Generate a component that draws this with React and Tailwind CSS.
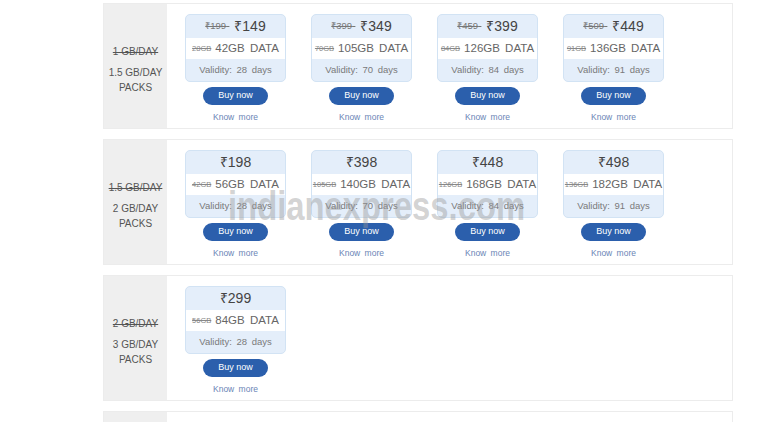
import React from "react";

const sections = [
  {
    old: "1 GB/DAY",
    title: ["1.5 GB/DAY", "PACKS"],
    cards: [
      { oldPrice: "₹199", price: "₹149", oldData: "28GB", data: "42GB", validity: "28" },
      { oldPrice: "₹399", price: "₹349", oldData: "70GB", data: "105GB", validity: "70" },
      { oldPrice: "₹459", price: "₹399", oldData: "84GB", data: "126GB", validity: "84" },
      { oldPrice: "₹509", price: "₹449", oldData: "91GB", data: "136GB", validity: "91" },
    ],
  },
  {
    old: "1.5 GB/DAY",
    title: ["2 GB/DAY", "PACKS"],
    cards: [
      { price: "₹198", oldData: "42GB", data: "56GB", validity: "28" },
      { price: "₹398", oldData: "105GB", data: "140GB", validity: "70" },
      { price: "₹448", oldData: "126GB", data: "168GB", validity: "84" },
      { price: "₹498", oldData: "136GB", data: "182GB", validity: "91" },
    ],
  },
  {
    old: "2 GB/DAY",
    title: ["3 GB/DAY", "PACKS"],
    cards: [{ price: "₹299", oldData: "56GB", data: "84GB", validity: "28" }],
  },
];

function Card({ c }) {
  return (
    <div className="flex w-[101px] flex-col items-center">
      <div className="w-full overflow-hidden rounded-[5px] border border-[#d2e3f4] bg-[#e4eefa]">
        <div className="flex h-[23px] items-center justify-center gap-[5px]">
          {c.oldPrice && (
            <span className="text-[9.5px] text-[#777] line-through">{c.oldPrice}-</span>
          )}
          <span className="text-[14px] text-[#444]">{c.price}</span>
        </div>
        <div className="flex h-[21px] items-center justify-center gap-[4px] bg-white">
          <span className="text-[7.5px] text-[#888] line-through">{c.oldData}</span>
          <span className="text-[11.5px] text-[#666] [word-spacing:2px]">{c.data} DATA</span>
        </div>
        <div className="flex h-[22px] items-center justify-center text-[9.5px] text-[#7a7a7a] [word-spacing:2px]">
          Validity: {c.validity} days
        </div>
      </div>
      <div className="mt-[5px] flex h-[18px] w-[65px] items-center justify-center rounded-full bg-[#2b5fac] text-[9px] text-white">
        Buy now
      </div>
      <div className="mt-[6px] text-[8.5px] text-[#6a85b6] [word-spacing:2px]">Know more</div>
    </div>
  );
}

export default function App() {
  return (
    <div
      className="relative h-[422px] w-[759px] overflow-hidden bg-white"
      style={{ fontFamily: '"Liberation Sans", Arial, sans-serif' }}
    >
      <div className="flex flex-col gap-[10px] pl-[103px] pt-[3px]">
        {sections.map((s, i) => (
          <div key={i} className="flex h-[126px] w-[630px] border border-[#ececec]">
            <div className="flex w-[63px] flex-col items-center justify-center bg-[#efefef] pt-[6px] text-center text-[10px] leading-[15px] text-[#555]">
              <div className="mb-[6px] line-through">{s.old}</div>
              <div>{s.title[0]}</div>
              <div>{s.title[1]}</div>
            </div>
            <div className="flex gap-[25px] pl-[18px] pt-[10px]">
              {s.cards.map((c, j) => (
                <Card key={j} c={c} />
              ))}
            </div>
          </div>
        ))}
        <div className="flex h-[126px] w-[630px] border border-[#ececec]">
          <div className="w-[63px] bg-[#efefef]" />
        </div>
      </div>
      <div className="pointer-events-none absolute left-[228px] top-[186px] origin-left scale-x-80 text-[41px] font-bold leading-none text-[rgba(150,150,150,0.42)]">
        indianexpress.com
      </div>
    </div>
  );
}
